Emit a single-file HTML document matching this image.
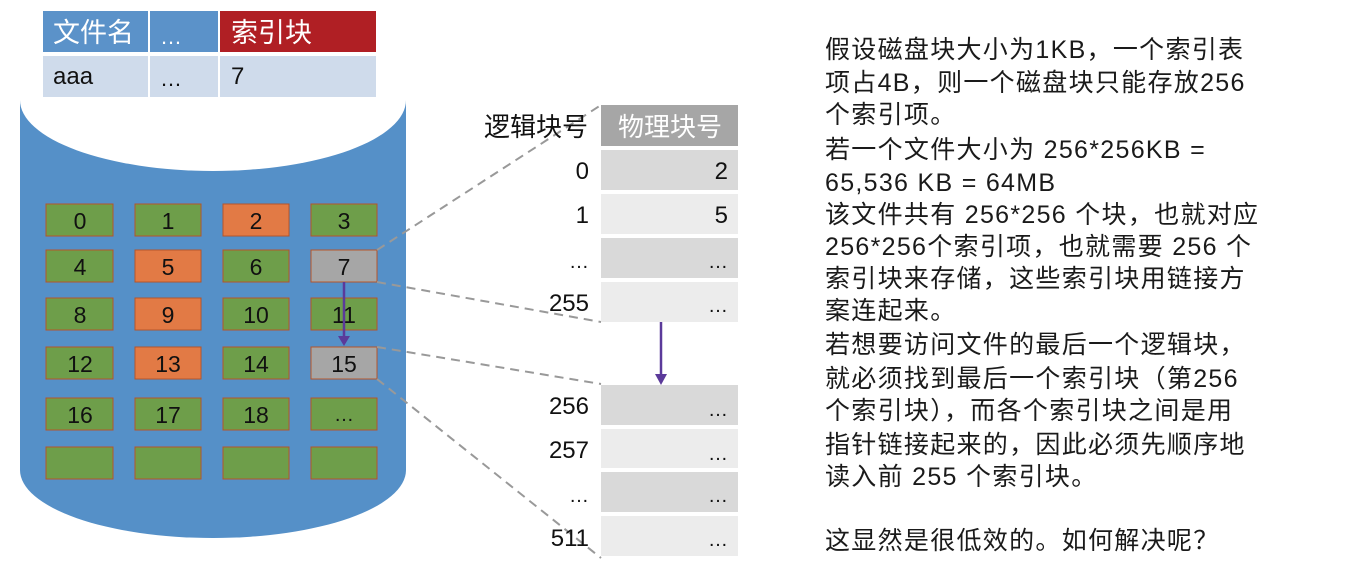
<!DOCTYPE html>
<html><head><meta charset="utf-8">
<style>
body{margin:0;width:1352px;height:571px;background:#fff;overflow:hidden;position:relative;font-family:"Liberation Sans","Noto Sans CJK SC",sans-serif;}
.t{position:absolute;left:825px;font-size:25px;letter-spacing:1.3px;white-space:nowrap;color:#1a1a1a;line-height:32px;}
</style></head><body>
<svg width="1352" height="571" style="position:absolute;left:0;top:0" font-family="Liberation Sans, Noto Sans CJK SC, sans-serif">
<path d="M20,100 L20,470 A193,68 0 0 0 406,470 L406,100 Z" fill="#5590c8"/>
<ellipse cx="213" cy="100" rx="193" ry="71" fill="#fff"/>
<rect x="43" y="11" width="105" height="41" fill="#5b92c9"/>
<rect x="150" y="11" width="68" height="41" fill="#5b92c9"/>
<rect x="220" y="11" width="156" height="41" fill="#b01f24"/>
<rect x="43" y="56" width="105" height="41" fill="#cfdbeb"/>
<rect x="150" y="56" width="68" height="41" fill="#cfdbeb"/>
<rect x="220" y="56" width="156" height="41" fill="#cfdbeb"/>
<g font-size="27" fill="#fff"><text x="53" y="42">文件名</text><text x="160" y="44" font-size="22">…</text><text x="231" y="42">索引块</text></g>
<g font-size="24" fill="#111"><text x="53" y="84">aaa</text><text x="160" y="86" font-size="22">…</text><text x="231" y="84">7</text></g>
<g stroke="#b5552a" stroke-width="1">
<g fill="#6e9e4a">
<rect x="46" y="204" width="67" height="32"/><rect x="135" y="204" width="66" height="32"/><rect x="311" y="204" width="66" height="32"/>
<rect x="46" y="250" width="67" height="32"/><rect x="223" y="250" width="66" height="32"/>
<rect x="46" y="298" width="67" height="32"/><rect x="223" y="298" width="66" height="32"/><rect x="311" y="298" width="66" height="32"/>
<rect x="46" y="347" width="67" height="32"/><rect x="223" y="347" width="66" height="32"/>
<rect x="46" y="398" width="67" height="32"/><rect x="135" y="398" width="66" height="32"/><rect x="223" y="398" width="66" height="32"/><rect x="311" y="398" width="66" height="32"/>
<rect x="46" y="447" width="67" height="32"/><rect x="135" y="447" width="66" height="32"/><rect x="223" y="447" width="66" height="32"/><rect x="311" y="447" width="66" height="32"/>
</g>
<g fill="#e27a45">
<rect x="223" y="204" width="66" height="32"/><rect x="135" y="250" width="66" height="32"/><rect x="135" y="298" width="66" height="32"/><rect x="135" y="347" width="66" height="32"/>
</g>
<g fill="#a6a6a6"><rect x="311" y="250" width="66" height="32"/><rect x="311" y="347" width="66" height="32"/></g>
</g>
<g font-size="23" fill="#111" text-anchor="middle">
<text x="80" y="229">0</text><text x="168" y="229">1</text><text x="256" y="229">2</text><text x="344" y="229">3</text>
<text x="80" y="275">4</text><text x="168" y="275">5</text><text x="256" y="275">6</text><text x="344" y="275">7</text>
<text x="80" y="323">8</text><text x="168" y="323">9</text><text x="256" y="323">10</text><text x="344" y="323">11</text>
<text x="80" y="372">12</text><text x="168" y="372">13</text><text x="256" y="372">14</text><text x="344" y="372">15</text>
<text x="80" y="423">16</text><text x="168" y="423">17</text><text x="256" y="423">18</text><text x="344" y="421" font-size="20">…</text>
</g>
<g stroke="#999" stroke-width="2" stroke-dasharray="9,6" fill="none">
<line x1="377" y1="250" x2="601" y2="105"/><line x1="377" y1="282" x2="601" y2="322"/>
<line x1="377" y1="347" x2="601" y2="384"/><line x1="377" y1="379" x2="601" y2="558"/>
</g>
<g stroke="#5b3a9a" stroke-width="2.5" fill="#5b3a9a">
<line x1="344" y1="282" x2="344" y2="338"/><polygon points="338,336 350,336 344,346" stroke="none"/>
<line x1="661" y1="322" x2="661" y2="376"/><polygon points="655,374 667,374 661,385" stroke="none"/>
</g>
<rect x="601" y="105" width="137" height="41" fill="#a6a6a6"/>
<text x="670" y="136" font-size="26" fill="#fff" text-anchor="middle">物理块号</text>
<text x="588" y="136" font-size="26" fill="#111" text-anchor="end">逻辑块号</text>
<g>
<rect x="601" y="150" width="137" height="40" fill="#d9d9d9"/><rect x="601" y="194" width="137" height="40" fill="#ececec"/>
<rect x="601" y="238" width="137" height="40" fill="#d9d9d9"/><rect x="601" y="282" width="137" height="40" fill="#ececec"/>
<rect x="601" y="385" width="137" height="40" fill="#d9d9d9"/><rect x="601" y="429" width="137" height="39" fill="#ececec"/>
<rect x="601" y="472" width="137" height="40" fill="#d9d9d9"/><rect x="601" y="516" width="137" height="40" fill="#ececec"/>
</g>
<g font-size="24" fill="#111" text-anchor="end">
<text x="589" y="179">0</text><text x="728" y="179">2</text>
<text x="589" y="223">1</text><text x="728" y="223">5</text>
<text x="589" y="268" font-size="20">…</text><text x="728" y="268" font-size="20">…</text>
<text x="589" y="311">255</text><text x="728" y="312" font-size="20">…</text>
<text x="589" y="414">256</text><text x="728" y="416" font-size="20">…</text>
<text x="589" y="458">257</text><text x="728" y="460" font-size="20">…</text>
<text x="589" y="502" font-size="20">…</text><text x="728" y="502" font-size="20">…</text>
<text x="589" y="546">511</text><text x="728" y="546" font-size="20">…</text>
</g>
</svg>
<div class="t" style="top:34px">假设磁盘块大小为1KB，一个索引表</div>
<div class="t" style="top:67px">项占4B，则一个磁盘块只能存放256</div>
<div class="t" style="top:99px">个索引项。</div>
<div class="t" style="top:134px">若一个文件大小为 256*256KB =</div>
<div class="t" style="top:167px">65,536 KB = 64MB</div>
<div class="t" style="top:199px">该文件共有 256*256 个块，也就对应</div>
<div class="t" style="top:231px">256*256个索引项，也就需要 256 个</div>
<div class="t" style="top:263px">索引块来存储，这些索引块用链接方</div>
<div class="t" style="top:295px">案连起来。</div>
<div class="t" style="top:329px">若想要访问文件的最后一个逻辑块，</div>
<div class="t" style="top:363px">就必须找到最后一个索引块（第256</div>
<div class="t" style="top:395px">个索引块），而各个索引块之间是用</div>
<div class="t" style="top:429px">指针链接起来的，因此必须先顺序地</div>
<div class="t" style="top:461px">读入前 255 个索引块。</div>
<div class="t" style="top:525px">这显然是很低效的。如何解决呢？</div>
</body></html>
